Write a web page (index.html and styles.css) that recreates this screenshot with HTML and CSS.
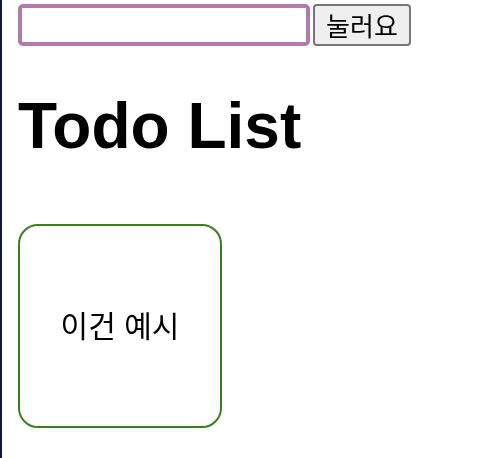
FILE: index.html
```html
<!DOCTYPE html>
<html lang="ko">
<head>
  <meta charset="UTF-8" />
  <meta name="viewport" content="width=device-width, initial-scale=1.0"/>
  <title>Todo List</title>
  <link rel="stylesheet" href="styles.css">
</head>
<body>
  <div class="page">
    <form class="todo-form">
      <input type="text" class="todo-input" name="todo" autofocus>
      <button type="submit" class="todo-button">눌러요</button>
    </form>

    <h1 class="heading">Todo List</h1>

    <div class="todo-list">
      <div class="todo-card">이건 예시</div>
    </div>
  </div>
</body>
</html>
```

FILE: styles.css
```css
* { box-sizing: border-box; }

html, body {
  margin: 0;
  padding: 0;
  background: #fff;
}

body {
  font-family: "Liberation Sans", "Noto Sans CJK KR", sans-serif;
  color: #000;
}

.page {
  min-height: 100vh;
  border-left: 2px solid #0f1a33;
  padding: 3px 16px 0;
}

.todo-form {
  display: flex;
  align-items: center;
  gap: 3px;
}

.todo-input {
  width: 292px;
  height: 42px;
  padding: 0 4px;
  border: 4px solid #b07aad;
  border-radius: 5px;
  font-size: 20px;
  outline: none;
  background: #fff;
  caret-color: #000;
}

.todo-button {
  width: 98px;
  height: 42px;
  margin-top: 1px;
  padding: 0;
  border: 2px solid #767676;
  border-radius: 4px;
  background: #efefef;
  font-family: "Noto Sans CJK KR", sans-serif;
  font-size: 26px;
  line-height: 1;
  color: #000;
}

.heading {
  font-size: 64px;
  font-weight: bold;
  margin: 0.67em 0 0;
}

.todo-list {
  display: flex;
  flex-wrap: wrap;
  gap: 16px;
  margin-top: 61px;
}

.todo-card {
  width: 204px;
  height: 204px;
  display: flex;
  align-items: center;
  justify-content: center;
  padding-bottom: 4px;
  border: 2px solid #3b7d23;
  border-radius: 20px;
  font-family: "Noto Sans CJK KR", sans-serif;
  font-size: 30px;
}
```
